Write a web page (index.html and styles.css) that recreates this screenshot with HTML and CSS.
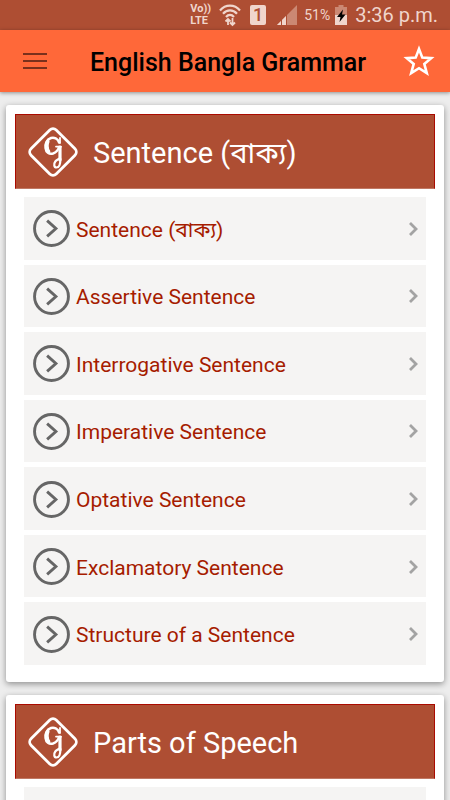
FILE: index.html
```html
<!DOCTYPE html>
<html lang="en">
<head>
<meta charset="utf-8">
<meta name="viewport" content="width=device-width, initial-scale=1">
<title>English Bangla Grammar</title>
<link rel="stylesheet" href="styles.css">
</head>
<body>
<svg class="sprite" aria-hidden="true">
  <symbol id="logo" viewBox="0 0 52 52">
    <rect x="8.200" y="8.200" width="35.600" height="35.600" rx="4.500" transform="rotate(45 26 26)" fill="none" stroke="#fff" stroke-width="2.800"/>
    <g fill="none" stroke="#fff" stroke-linecap="round" stroke-linejoin="round">
      <path stroke-width="2.400" d="M32 16.500C31 12.500 27 11 24 12C19.500 13.500 18 18 18.500 22C19 26.500 22 28.500 26 27.500C29 26.500 31 24.500 32 21"/>
      <path stroke-width="3.600" d="M20.800 15.500C19.500 18.500 19.700 22.500 21.500 25.500"/>
      <path stroke-width="1.800" d="M33 12V17M29 20.600H34"/>
      <path stroke-width="3.200" d="M33 21.200V34"/>
      <path stroke-width="2.200" d="M33.400 33C33.400 38 32 41.500 29.500 41.500C27 41.500 26.500 38 28.300 35.500C29.500 33.800 31 34 33 32"/>
    </g>
  </symbol>
  <symbol id="go" viewBox="0 0 38 38">
    <circle cx="19" cy="19" r="17.400" fill="none" stroke="#666" stroke-width="3"/>
    <path d="M14.500 11L23.500 19L14.500 27" fill="none" stroke="#666" stroke-width="3"/>
  </symbol>
  <symbol id="chevron" viewBox="0 0 10 16">
    <path d="M2 2L8 8L2 14" fill="none" stroke="#a3a3a3" stroke-width="2.800"/>
  </symbol>
</svg>

<div class="status">
  <span class="volte"><span>Vo))</span><span>LTE</span></span>
  <svg class="wifi" viewBox="0 0 22 24" aria-hidden="true">
    <g fill="none" stroke="#f0d5cc" stroke-width="2.200">
      <path d="M1 7.500C6.500 1 15.500 1 21 7.500M4 10.800C8 6.300 14 6.300 18 10.800M7 14C9.500 11.200 12.500 11.200 15 14"/>
      <path stroke-width="1.800" d="M9 22V16M6.500 18.500L9 16L11.500 18.500M13.500 15V22M11 19.500L13.500 22L16 19.500"/>
    </g>
  </svg>
  <span class="sim">1</span>
  <svg class="signal" viewBox="0 0 20 20" aria-hidden="true">
    <path d="M0 20L20 0V20Z" fill="#cb8873"/>
    <path d="M0 20L10 10V20Z" fill="#f0d5cc"/>
    <path d="M4.500 15V20M9.500 10V20" stroke="#ae4e33"/>
  </svg>
  <span class="percent">51%</span>
  <svg class="battery" viewBox="0 0 12 20" aria-hidden="true">
    <path d="M3.500 0H8.500V2H12V20H0V2H3.500Z" fill="#cb8873"/>
    <path d="M0 10H12V20H0Z" fill="#f0d5cc"/>
    <path d="M8 4.500L2 12H5.500L4.500 17L10.500 9.500H7Z" fill="#000"/>
  </svg>
  <time class="clock">3:36 p.m.</time>
</div>

<header class="appbar">
  <button class="icon-button" type="button" aria-label="Menu">
    <svg class="menu" viewBox="0 0 24 18" aria-hidden="true"><path d="M0 2H24M0 9H24M0 16H24" stroke="#7a301c" stroke-width="2"/></svg>
  </button>
  <h1>English Bangla Grammar</h1>
  <button class="icon-button" type="button" aria-label="Favourites">
    <svg class="star" viewBox="0 0 32 32" aria-hidden="true"><path d="M16 4L19.300 12.600L28.200 13.200L21.300 18.900L23.800 28.200L16 23.200L8.200 28.200L10.700 18.900L3.800 13.200L12.700 12.600Z" fill="none" stroke="#fff" stroke-width="2.600"/></svg>
  </button>
</header>

<main>
  <section class="card">
    <h2><svg class="logo" aria-hidden="true"><use href="#logo"/></svg><span>Sentence (বাক্য)</span></h2>
    <ul class="topics full">
      <li><a href="#"><svg class="go" aria-hidden="true"><use href="#go"/></svg><span>Sentence (বাক্য)</span><svg class="chevron" aria-hidden="true"><use href="#chevron"/></svg></a></li>
      <li><a href="#"><svg class="go" aria-hidden="true"><use href="#go"/></svg><span>Assertive Sentence</span><svg class="chevron" aria-hidden="true"><use href="#chevron"/></svg></a></li>
      <li><a href="#"><svg class="go" aria-hidden="true"><use href="#go"/></svg><span>Interrogative Sentence</span><svg class="chevron" aria-hidden="true"><use href="#chevron"/></svg></a></li>
      <li><a href="#"><svg class="go" aria-hidden="true"><use href="#go"/></svg><span>Imperative Sentence</span><svg class="chevron" aria-hidden="true"><use href="#chevron"/></svg></a></li>
      <li><a href="#"><svg class="go" aria-hidden="true"><use href="#go"/></svg><span>Optative Sentence</span><svg class="chevron" aria-hidden="true"><use href="#chevron"/></svg></a></li>
      <li><a href="#"><svg class="go" aria-hidden="true"><use href="#go"/></svg><span>Exclamatory Sentence</span><svg class="chevron" aria-hidden="true"><use href="#chevron"/></svg></a></li>
      <li><a href="#"><svg class="go" aria-hidden="true"><use href="#go"/></svg><span>Structure of a Sentence</span><svg class="chevron" aria-hidden="true"><use href="#chevron"/></svg></a></li>
    </ul>
  </section>
  <section class="card">
    <h2><svg class="logo" aria-hidden="true"><use href="#logo"/></svg><span>Parts of Speech</span></h2>
    <ul class="topics">
      <li><a href="#" aria-label="Parts of Speech"><svg class="go" aria-hidden="true"><use href="#go"/></svg></a></li>
    </ul>
  </section>
</main>
</body>
</html>
```
FILE: styles.css
```css
* {
  box-sizing: border-box;
}

body {
  display: flex;
  flex-direction: column;
  height: 100vh;
  margin: 0;
  overflow: hidden;
  background: #ededed;
  font-family: Roboto, "Noto Sans Bengali", "Noto Sans", sans-serif;
}

.sprite {
  position: absolute;
  width: 0;
  height: 0;
}

svg {
  display: block;
  flex: none;
}

.status {
  display: flex;
  flex: none;
  align-items: center;
  justify-content: flex-end;
  height: 30px;
  padding-right: 12px;
  background: #ae4e33;
  color: #f0d5cc;
}

.volte {
  display: flex;
  flex-direction: column;
  margin-right: 8px;
  font-size: 11px;
  font-weight: 700;
  line-height: 12px;
}

.wifi {
  width: 22px;
  height: 24px;
  margin-right: 9px;
}

.sim {
  width: 16px;
  height: 20px;
  margin-right: 11px;
  border-radius: 2px;
  background: #f0d5cc;
  color: #ae4e33;
  font-size: 18px;
  font-weight: 500;
  line-height: 20px;
  text-align: center;
}

.signal {
  width: 20px;
  height: 20px;
  margin-right: 7px;
}

.percent {
  margin-right: 5px;
  font-size: 14px;
}

.battery {
  width: 12px;
  height: 20px;
  margin-right: 8px;
}

.clock {
  font-size: 20px;
}

.appbar {
  position: relative;
  display: flex;
  flex: none;
  align-items: center;
  height: 62px;
  padding: 0 14px;
  background: #ff6839;
  box-shadow: 0 1px 4px rgba(0, 0, 0, 0.4);
}

.appbar h1 {
  flex: 1;
  margin: 0;
  padding: 2px 0 0 34px;
  color: #000;
  font-size: 25px;
  font-weight: 500;
  white-space: nowrap;
}

.icon-button {
  display: grid;
  flex: none;
  place-items: center;
  width: 42px;
  height: 42px;
  padding: 0;
  border: 0;
  background: none;
}

.icon-button:last-child {
  width: 34px;
}

.menu {
  width: 24px;
  height: 18px;
}

.star {
  width: 32px;
  height: 32px;
}

main {
  display: flex;
  flex: 1;
  flex-direction: column;
  gap: 13px;
  min-height: 0;
  padding: 13px 6px;
  overflow: hidden;
}

.card {
  flex: none;
  padding: 9px 9px 17px;
  border-radius: 3px;
  background: #fff;
  box-shadow: 0 2px 6px rgba(0, 0, 0, 0.4);
}

.card h2 {
  display: flex;
  align-items: center;
  gap: 14px;
  height: 75px;
  margin: 0 0 8px;
  padding-left: 11px;
  border: 1px solid #aa0a00;
  border-bottom-color: #c07864;
  background: #ae4e33;
  color: #fff;
  font-size: 29px;
  font-weight: 400;
  line-height: 34px;
}

.card h2 span {
  padding-top: 2px;
}

.logo {
  width: 52px;
  height: 52px;
}

.topics {
  display: grid;
  grid-auto-rows: minmax(62px, 1fr);
  gap: 5px;
  margin: 0;
  padding: 0 9px;
  list-style: none;
}

.topics.full {
  min-height: 468px;
}

.topics a {
  display: flex;
  align-items: center;
  height: 100%;
  padding: 1px 8px 0 9px;
  background: #f5f4f3;
  color: #a61c00;
  font-size: 21px;
  line-height: 26px;
  text-decoration: none;
}

.topics span {
  flex: 1;
  padding: 2px 0 0 6px;
}

.go {
  width: 37px;
  height: 37px;
}

.chevron {
  width: 10px;
  height: 16px;
}
```
